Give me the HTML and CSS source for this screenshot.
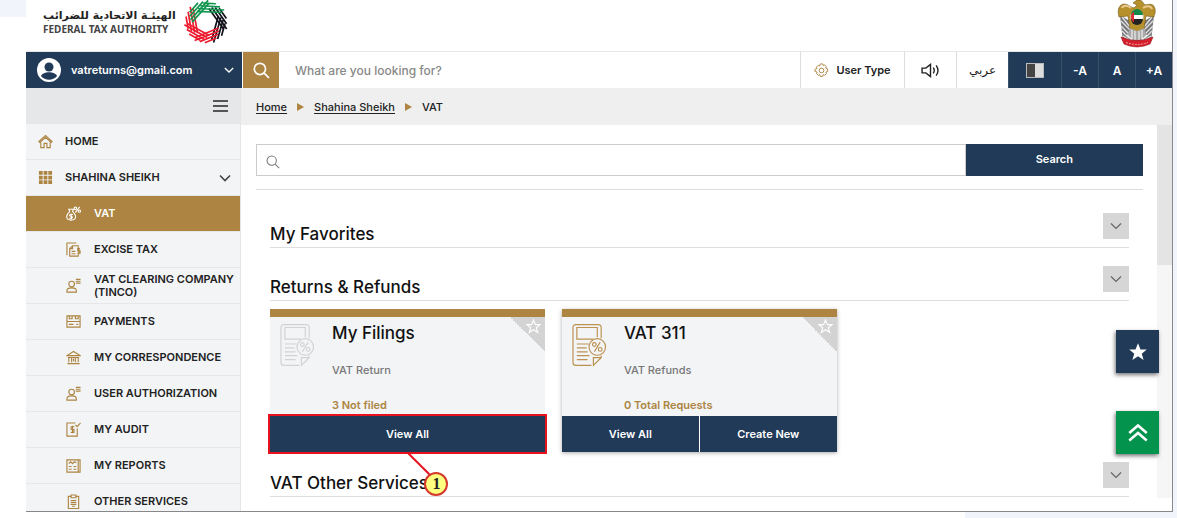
FILE: index.html
```
<!DOCTYPE html>
<html lang="en">
<head>
<meta charset="utf-8">
<title>Federal Tax Authority - VAT</title>
<meta name="viewport" content="width=device-width, initial-scale=1">
<link rel="stylesheet" href="styles.css">
</head>
<body>
<!-- shared icons -->
<svg class="defs" aria-hidden="true">
  <symbol id="i-search" viewBox="0 0 16 16"><circle cx="6.5" cy="6.5" r="5.3"/><path d="M10.5 10.5l4.5 4.5"/></symbol>
  <symbol id="i-down" viewBox="0 0 12 8"><path d="M1 1.5l5 5 5-5"/></symbol>
  <symbol id="i-user" viewBox="0 0 16 16"><circle cx="6" cy="6.500" r="3"/><path d="M1 15v-1.500c0-4 10-4 10 0V15zM10.500 1.500h5M10.500 3.500h5M10.500 5.500h5"/></symbol>
  <symbol id="i-star" viewBox="0 0 16 16"><path d="M8 1l2 5h5l-4 3.300 1.500 5L8 11.400 3.500 14.300 5 9.300 1 6h5z"/></symbol>
  <symbol id="i-form" viewBox="0 0 36 44">
    <path d="M30 15V4q0-3-3-3H4Q1 1 1 4v36q0 3 3 3h16M30 33v2l-8 8v-8h8"/>
    <path d="M26 14V4H5v12h17M5 21h12M5 25h10M5 29h11M5 33h13M5 37h11"/>
    <circle cx="26" cy="24" r="8.500"/>
    <path d="M29 19l-6 10"/><circle cx="23" cy="21.500" r="1.900"/><circle cx="29" cy="26.500" r="1.900"/>
  </symbol>
</svg>

<div class="app">
  <header class="header">
    <div class="brand">
      <div class="brand-text">
        <span class="brand-ar" lang="ar" dir="rtl">الهيئـة الاتحادية للضرائب</span>
        <span class="brand-en">FEDERAL TAX AUTHORITY</span>
      </div>
      <svg class="brand-logo" viewBox="-22 -22 44 44" aria-hidden="true">
        <defs>
          <path id="stripes" d="M-12 -7L12 -14.500M-12 -10L13 -17.500M-11 -13.300L8 -19M-9 -16.800L3 -20.500"/>
        </defs>
        <use href="#stripes" stroke="#11111a" transform="rotate(72)"/>
        <use href="#stripes" stroke="#11111a" transform="rotate(123)"/>
        <use href="#stripes" stroke="#ee1c2e" transform="rotate(175)"/>
        <use href="#stripes" stroke="#ee1c2e" transform="rotate(226)"/>
        <use href="#stripes" stroke="#ee1c2e" transform="rotate(277)"/>
        <use href="#stripes" stroke="#10964f" transform="rotate(329)"/>
        <use href="#stripes" stroke="#10964f" transform="rotate(20)"/>
      </svg>
    </div>
    <svg class="emblem" viewBox="0 0 40 48" aria-hidden="true">
      <path d="M3 15l3 27 7 2 14 0 7-2 3-27-8 5H11z" fill="#77777a"/>
      <path d="M5 17l8 10M4 21l10 10M4 26l9 9M5 31l7 7M6 36l6 4M35 17l-8 10M36 21L26 31M36 26l-9 9M35 31l-7 7M34 36l-6 4" stroke="#e2e2e2" stroke-width="1.300"/>
      <path d="M2 17C0 9 2 5 7 4c4 0 6 3 10 4l3-3-4-2 4-3c5-1 6 3 8 5 4-1 9-2 10 4 1 4-1 6-1 8l-8-1-2 13-7 4-7-4-2-13z" fill="#b6912b" stroke="#72571c" stroke-width=".600"/>
      <path d="M5 8c1-3 6-3 9 0M26 8c4-3 8-2 9 1" fill="none" stroke="#e9c98f" stroke-width="2"/>
      <path d="M13 28l7 3 7-3 3 8-4 4H14l-4-4z" fill="#a8a8a8"/>
      <path d="M15 30v9M18 31v9M22 31v9M25 30v9M10 35l5 5M30 35l-5 5" stroke="#f3f3f3" stroke-width="1.100"/>
      <circle cx="20" cy="17" r="6.500" fill="#fff" stroke="#c8b489"/>
      <path d="M14 15a6 6 0 0 1 12 0z" fill="#14884b"/>
      <path d="M14 19a6 6 0 0 0 12 0z" fill="#222"/>
      <path d="M17 11.500v11c-4-3-4-8 0-11z" fill="#e22733"/>
      <path d="M4 37q16 7 32 0l-3 7q-13 6-26 0z" fill="#d61f2c" stroke="#9c1420" stroke-width=".600"/>
      <path d="M9 42.500q11 4 22 0" fill="none" stroke="#f0a09c" stroke-width="1" stroke-dasharray="2 1"/>
    </svg>
  </header>

  <div class="toolbar">
    <button class="account">
      <svg class="avatar" viewBox="0 0 24 24" aria-hidden="true"><circle cx="12" cy="12" r="12" fill="#fff"/><circle cx="12" cy="9" r="4.500" fill="#203a58"/><path d="M4 18c2-5 14-5 16 0-4 5-12 5-16 0z" fill="#203a58"/></svg>
      <span>vatreturns@gmail.com</span>
      <svg class="icon chevron" aria-hidden="true"><use href="#i-down"/></svg>
    </button>
    <button class="find" aria-label="Search site"><svg class="icon" aria-hidden="true"><use href="#i-search"/></svg></button>
    <input class="site-search" type="text" placeholder="What are you looking for?" aria-label="What are you looking for?">
    <button class="tool user-type">
      <svg class="icon" viewBox="0 0 16 16" aria-hidden="true"><circle cx="8" cy="8" r="2.500"/><path d="M6.700 1h2.600l.5 1.700 1.400-.7 1.900 1.900-.7 1.500 2.100.8v2.800l-1.800.7.6 1.500-1.900 1.900-1.600-.7-.5 1.900H6.700l-.5-1.900-1.600.7-1.900-1.900.7-1.500L1 9V6.700l2.300-.8-.7-1.500 1.900-1.900 1.600.6z"/></svg>
      User Type
    </button>
    <button class="tool sound" aria-label="Read aloud"><svg class="icon" viewBox="0 0 20 16" aria-hidden="true"><path d="M1 5.500v5h4l5 4V1.500l-5 4zM13 5q2 3 0 6M16 2.500q4 5.500 0 11"/></svg></button>
    <button class="tool lang" lang="ar">عربي</button>
    <button class="tool dark contrast" aria-label="Contrast"><span class="contrast-box"></span></button>
    <button class="tool dark">-A</button>
    <button class="tool dark">A</button>
    <button class="tool dark">+A</button>
  </div>

  <div class="content">
    <nav class="sidebar">
      <div class="menu-bar">
        <button class="menu-toggle" aria-label="Toggle menu"><span></span><span></span><span></span></button>
      </div>
      <a href="#" class="item">
        <svg class="icon" viewBox="0 0 16 16" aria-hidden="true"><path d="M1 8l7-6.500L15 8l-1 1-6-5.500L2 9zM3 9v5.500h3.500V10h3v4.500H13V9"/></svg>
        HOME
      </a>
      <a href="#" class="item">
        <svg class="icon solid" viewBox="0 0 16 16" aria-hidden="true"><path d="M1 1h4v4H1zM6 1h4v4H6zM11 1h4v4h-4zM1 6h4v4H1zM6 6h4v4H6zM11 6h4v4h-4zM1 11h4v4H1zM6 11h4v4H6zM11 11h4v4h-4z"/></svg>
        SHAHINA SHEIKH
        <svg class="icon chevron" aria-hidden="true"><use href="#i-down"/></svg>
      </a>
      <a href="#" class="item sub active">
        <svg class="icon" viewBox="0 0 16 16" aria-hidden="true"><path d="M3 3.500h5L7 6c5 4 4 9-1.500 9S-1 10 4 6zM7.500 9H5q-1.500 0-1 1.500l2.500 1q.5 1.500-1 1.500H3.500M5.500 8v6M14.500 1L10 7"/><circle cx="10" cy="2.500" r="1.300"/><circle cx="14.300" cy="5.500" r="1.200"/></svg>
        VAT
      </a>
      <a href="#" class="item sub">
        <svg class="icon" viewBox="0 0 16 16" aria-hidden="true"><path d="M11 1H1v13M13 6V4H7L4 7v8h9v-2M7 4v3H4M6 10h4M6 12.500h4M15 7h-2.500v2.500H15V12h-3M13.700 6v7"/></svg>
        EXCISE TAX
      </a>
      <a href="#" class="item sub">
        <svg class="icon" aria-hidden="true"><use href="#i-user"/></svg>
        VAT CLEARING COMPANY (TINCO)
      </a>
      <a href="#" class="item sub">
        <svg class="icon" viewBox="0 0 16 16" aria-hidden="true"><path d="M1 2h14v12H1zM1 8h14M3.500 2v3h3V2M10 2v3h3V2M3 11h5M11 11h2"/></svg>
        PAYMENTS
      </a>
      <a href="#" class="item sub">
        <svg class="icon" viewBox="0 0 16 16" aria-hidden="true"><path d="M1 6l7-4.500L15 6zM2 8h12M3 8v5M6 8v5M10 8v5M13 8v5M1.500 14.500h13M8 9v3"/></svg>
        MY CORRESPONDENCE
      </a>
      <a href="#" class="item sub">
        <svg class="icon" aria-hidden="true"><use href="#i-user"/></svg>
        USER AUTHORIZATION
      </a>
      <a href="#" class="item sub">
        <svg class="icon" viewBox="0 0 16 16" aria-hidden="true"><path d="M10 1H1v14h11V7M10 3l2 2 3.500-4M9 5H5.500v3H8.500v3H5M7 4v8"/></svg>
        MY AUDIT
      </a>
      <a href="#" class="item sub">
        <svg class="icon" viewBox="0 0 16 16" aria-hidden="true"><path d="M1 2h12v13H1zM13 2h2v13h-4M3 6l2-2 2 2 2-2 2 1M3 9h3M3 12h3M8 9h3M8 12h3"/></svg>
        MY REPORTS
      </a>
      <a href="#" class="item sub">
        <svg class="icon" viewBox="0 0 16 16" aria-hidden="true"><path d="M5 2.500H2.500v13h11v-13H11M5.500 1h5v3h-5zM5 7h6M5 9h6M5 11h6M6.500 13h3"/></svg>
        OTHER SERVICES
      </a>
    </nav>

    <main class="main">
      <div class="breadcrumb">
        <a href="#">Home</a><i></i><a href="#">Shahina Sheikh</a><i></i><span>VAT</span>
      </div>
      <div class="scroll-area">
        <div class="page">
          <form class="search-row">
            <svg class="icon" aria-hidden="true"><use href="#i-search"/></svg>
            <input type="text" aria-label="Search services">
            <button type="button">Search</button>
          </form>

          <section class="section">
            <div class="section-head">
              <h2>My Favorites</h2>
              <button aria-label="Expand My Favorites"><svg class="icon" aria-hidden="true"><use href="#i-down"/></svg></button>
            </div>
          </section>

          <section class="section">
            <div class="section-head">
              <h2>Returns &amp; Refunds</h2>
              <button aria-label="Expand Returns and Refunds"><svg class="icon" aria-hidden="true"><use href="#i-down"/></svg></button>
            </div>
            <div class="cards">
              <article class="card muted">
                <div class="card-body">
                  <svg class="icon form" aria-hidden="true"><use href="#i-form"/></svg>
                  <div class="card-text">
                    <h3>My Filings</h3>
                    <p>VAT Return</p>
                    <p class="count">3 Not filed</p>
                  </div>
                  <button class="favorite" aria-label="Add My Filings to favorites"><svg class="icon" aria-hidden="true"><use href="#i-star"/></svg></button>
                </div>
                <div class="card-actions"><button>View All</button></div>
                <div class="callout">
                  <svg viewBox="0 0 24 24" aria-hidden="true"><path d="M0 0l24 24"/></svg>
                  <span>1</span>
                </div>
              </article>
              <article class="card raised">
                <div class="card-body">
                  <svg class="icon form" aria-hidden="true"><use href="#i-form"/></svg>
                  <div class="card-text">
                    <h3>VAT 311</h3>
                    <p>VAT Refunds</p>
                    <p class="count">0 Total Requests</p>
                  </div>
                  <button class="favorite" aria-label="Add VAT 311 to favorites"><svg class="icon" aria-hidden="true"><use href="#i-star"/></svg></button>
                </div>
                <div class="card-actions"><button>View All</button><button>Create New</button></div>
              </article>
            </div>
          </section>

          <section class="section">
            <div class="section-head">
              <h2>VAT Other Services</h2>
              <button aria-label="Expand VAT Other Services"><svg class="icon" aria-hidden="true"><use href="#i-down"/></svg></button>
            </div>
          </section>
        </div>
        <div class="scrollbar"><div class="thumb"></div></div>
      </div>
    </main>
  </div>

  <div class="floating">
    <button aria-label="Favorites"><svg class="icon solid" aria-hidden="true"><use href="#i-star"/></svg></button>
    <button class="to-top" aria-label="Back to top"><svg class="icon" viewBox="0 0 16 16" aria-hidden="true"><path d="M1 8l7-6 7 6M1 14l7-6 7 6"/></svg></button>
  </div>
</div>
</body>
</html>
```
FILE: styles.css
```
* { box-sizing: border-box; }
body { margin: 0; height: 100vh; padding: 0 4px 6px 26px; display: flex; font-family: Inter, "DejaVu Sans", sans-serif; font-size: 11px; font-weight: 500; color: #222; background: linear-gradient(#f1f4fa, #f1f4fa) 0 0 / 26px 17px no-repeat, linear-gradient(#f1f4fa, #f1f4fa) 100% 0 / 18% 100% no-repeat, #fff; }
button { font: inherit; font-weight: 600; color: inherit; border: none; padding: 0; cursor: pointer; display: flex; align-items: center; justify-content: center; }
input { font: inherit; border: none; outline: none; min-width: 0; }
a { color: inherit; }
h2, h3, p { margin: 0; }
.defs { position: absolute; width: 0; height: 0; }
.icon { width: 15px; height: 15px; flex: none; fill: none; stroke: currentColor; stroke-width: 1.2; }
.icon.solid { fill: currentColor; stroke: none; }

.app { position: relative; flex: 1; min-width: 0; display: flex; flex-direction: column; overflow: hidden; background-color: #fff; border-right: 1px solid #888; border-bottom: 1px solid #888; }

.header { height: 52px; flex: none; display: flex; justify-content: space-between; align-items: flex-start; padding: 0 15px 0 17px; border-bottom: 1px solid #e6e6e6; }
.brand { display: flex; gap: 8px; align-items: flex-start; }
.brand-text { display: flex; flex-direction: column; padding-top: 9px; }
.brand-ar { font: bold 11px/14px "DejaVu Sans", sans-serif; white-space: nowrap; }
.brand-en { font: bold 10px/12px "Noto Sans", sans-serif; color: #444; white-space: nowrap; }
.brand-logo { width: 44px; height: 44px; stroke-width: 1.7; }
.emblem { width: 40px; height: 48px; }

.toolbar { display: flex; height: 36px; flex: none; }
.account { width: 216px; flex: none; background-color: #203a58; color: #fff; justify-content: flex-start; padding: 0 8px 0 11px; gap: 10px; }
.avatar { width: 24px; height: 24px; flex: none; }
.chevron { width: 10px; height: 8px; margin-left: auto; stroke-width: 1.6; }
.find { width: 36px; flex: none; margin-left: 1px; background-color: #ad8441; color: #fff; }
.find .icon { width: 17px; height: 17px; stroke-width: 1.6; }
.site-search { flex: 1; padding: 0 16px; font-size: 12px; }
.site-search::placeholder { color: #888; opacity: 1; }
.tool { width: 52px; flex: none; background-color: #fff; border-left: 1px solid #ddd; }
.user-type { width: 104px; gap: 7px; }
.user-type .icon { color: #ad8441; stroke-width: 1; }
.sound .icon { width: 19px; height: 15px; stroke-width: 1.5; }
.lang { font-family: "DejaVu Sans", sans-serif; font-size: 12px; font-weight: 400; }
.dark { width: 37px; background-color: #203a58; color: #fff; border-left: 1px solid #37516b; font-size: 12px; }
.contrast { width: 53px; }
.contrast-box { width: 18px; height: 15px; border: 1px solid #bbb; background: linear-gradient(90deg, #444 50%, #ddd 50%); }

.content { flex: 1; display: flex; min-height: 0; }
.sidebar { width: 215px; flex: none; background-color: #f2f4f6; border-right: 1px solid #e5e5e5; overflow: hidden; font-weight: 600; }
.menu-bar { height: 36px; background-color: #e5e7e9; display: flex; justify-content: flex-end; align-items: center; padding: 0 12px; }
.menu-toggle { background: none; flex-direction: column; gap: 3px; }
.menu-toggle span { width: 15px; height: 2px; background-color: #555; }
.item { height: 36px; display: flex; align-items: center; gap: 12px; padding: 0 9px 0 12px; border-bottom: 1px solid #e5e7e9; text-decoration: none; line-height: 13px; }
.item .icon { color: #ad8441; }
.item .chevron { width: 12px; color: #444; }
.item.sub { padding: 0 0 0 40px; gap: 13px; }
.item.active { background-color: #ad8441; color: #fff; }
.item.active .icon { color: #fff; }

.main { flex: 1; min-width: 0; display: flex; flex-direction: column; }
.breadcrumb { height: 37px; flex: none; background-color: #efefef; display: flex; align-items: center; gap: 10px; padding: 0 15px; }
.breadcrumb a { text-underline-offset: 2px; }
.breadcrumb i { border-left: 7px solid #ad8441; border-top: 4px solid transparent; border-bottom: 4px solid transparent; }
.scroll-area { flex: 1; min-height: 0; display: flex; align-items: flex-start; }
.page { flex: 1; padding: 19px 14px 0 15px; }
.scrollbar { width: 15px; height: calc(100% - 13px); background-color: #f6f6f6; }
.thumb { height: 140px; background-color: #e4e4e4; }

.search-row { display: flex; align-items: center; position: relative; padding-bottom: 13px; border-bottom: 1px solid #ddd; margin-bottom: 23px; }
.search-row .icon { position: absolute; left: 10px; top: 11px; width: 14px; height: 14px; color: #777; }
.search-row input { flex: 1; height: 32px; padding: 0 10px 0 32px; border: 1px solid #ccc; }
.search-row button { width: 20%; height: 32px; background-color: #203a58; color: #fff; padding-bottom: 2px; }

.section { padding: 0 14px; margin-bottom: 18px; }
.section-head { height: 35px; display: flex; justify-content: space-between; border-bottom: 1px solid #ddd; }
.section-head h2 { align-self: flex-end; font-size: 17px; line-height: 26px; font-weight: 500; color: #111; }
.section-head button { width: 26px; height: 26px; background-color: #d6d6d6; color: #666; }
.section-head .icon { width: 12px; height: 8px; }
.cards { display: flex; gap: 17px; margin: 8px 0 -8px; }
.card { position: relative; width: 32%; background-color: #f2f4f6; border-top: 8px solid #ad8441; }
.card.raised { box-shadow: 0 1px 4px #aaa; }
.card-body { position: relative; height: 99px; display: flex; gap: 17px; padding: 4px 10px; }
.form { width: 35px; height: 44px; margin-top: 2px; color: #bd9150; }
.muted .form { color: #d2d2d2; }
.card h3 { font-size: 17px; line-height: 24px; font-weight: 500; color: #111; }
.card p { line-height: 14px; color: #777; margin-top: 18px; }
.card .count { color: #ad8441; font-weight: 600; margin-top: 21px; }
.favorite { position: absolute; top: 0; right: 0; width: 35px; height: 35px; background: linear-gradient(45deg, transparent 50%, #d3d3d3 50%); color: #fff; align-items: flex-start; justify-content: flex-end; padding: 2px 4px; }
.card-actions { display: flex; gap: 1px; background-color: #fff; }
.card-actions button { flex: 1; height: 36px; background-color: #203a58; color: #fff; }
.muted .card-actions { outline: 2px solid #e8121d; }
.callout { position: absolute; top: 100%; left: 50%; z-index: 1; }
.callout svg { display: block; width: 24px; height: 24px; stroke: #e8121d; stroke-width: 2; }
.callout span { position: absolute; left: 17px; top: 20px; width: 24px; height: 24px; border: 2px solid #d33a2c; border-radius: 50%; background-color: #ffff80; color: #222; font: bold 16px/20px "Liberation Serif", serif; text-align: center; }

.floating { position: absolute; right: 13px; top: 330px; display: flex; flex-direction: column; gap: 38px; }
.floating button { width: 43px; height: 43px; background-color: #203a58; color: #fff; box-shadow: -1px 2px 4px #777; }
.floating .icon { width: 20px; height: 20px; }
.floating .to-top { background-color: #04934c; }
.to-top .icon { stroke-width: 2; }
```
